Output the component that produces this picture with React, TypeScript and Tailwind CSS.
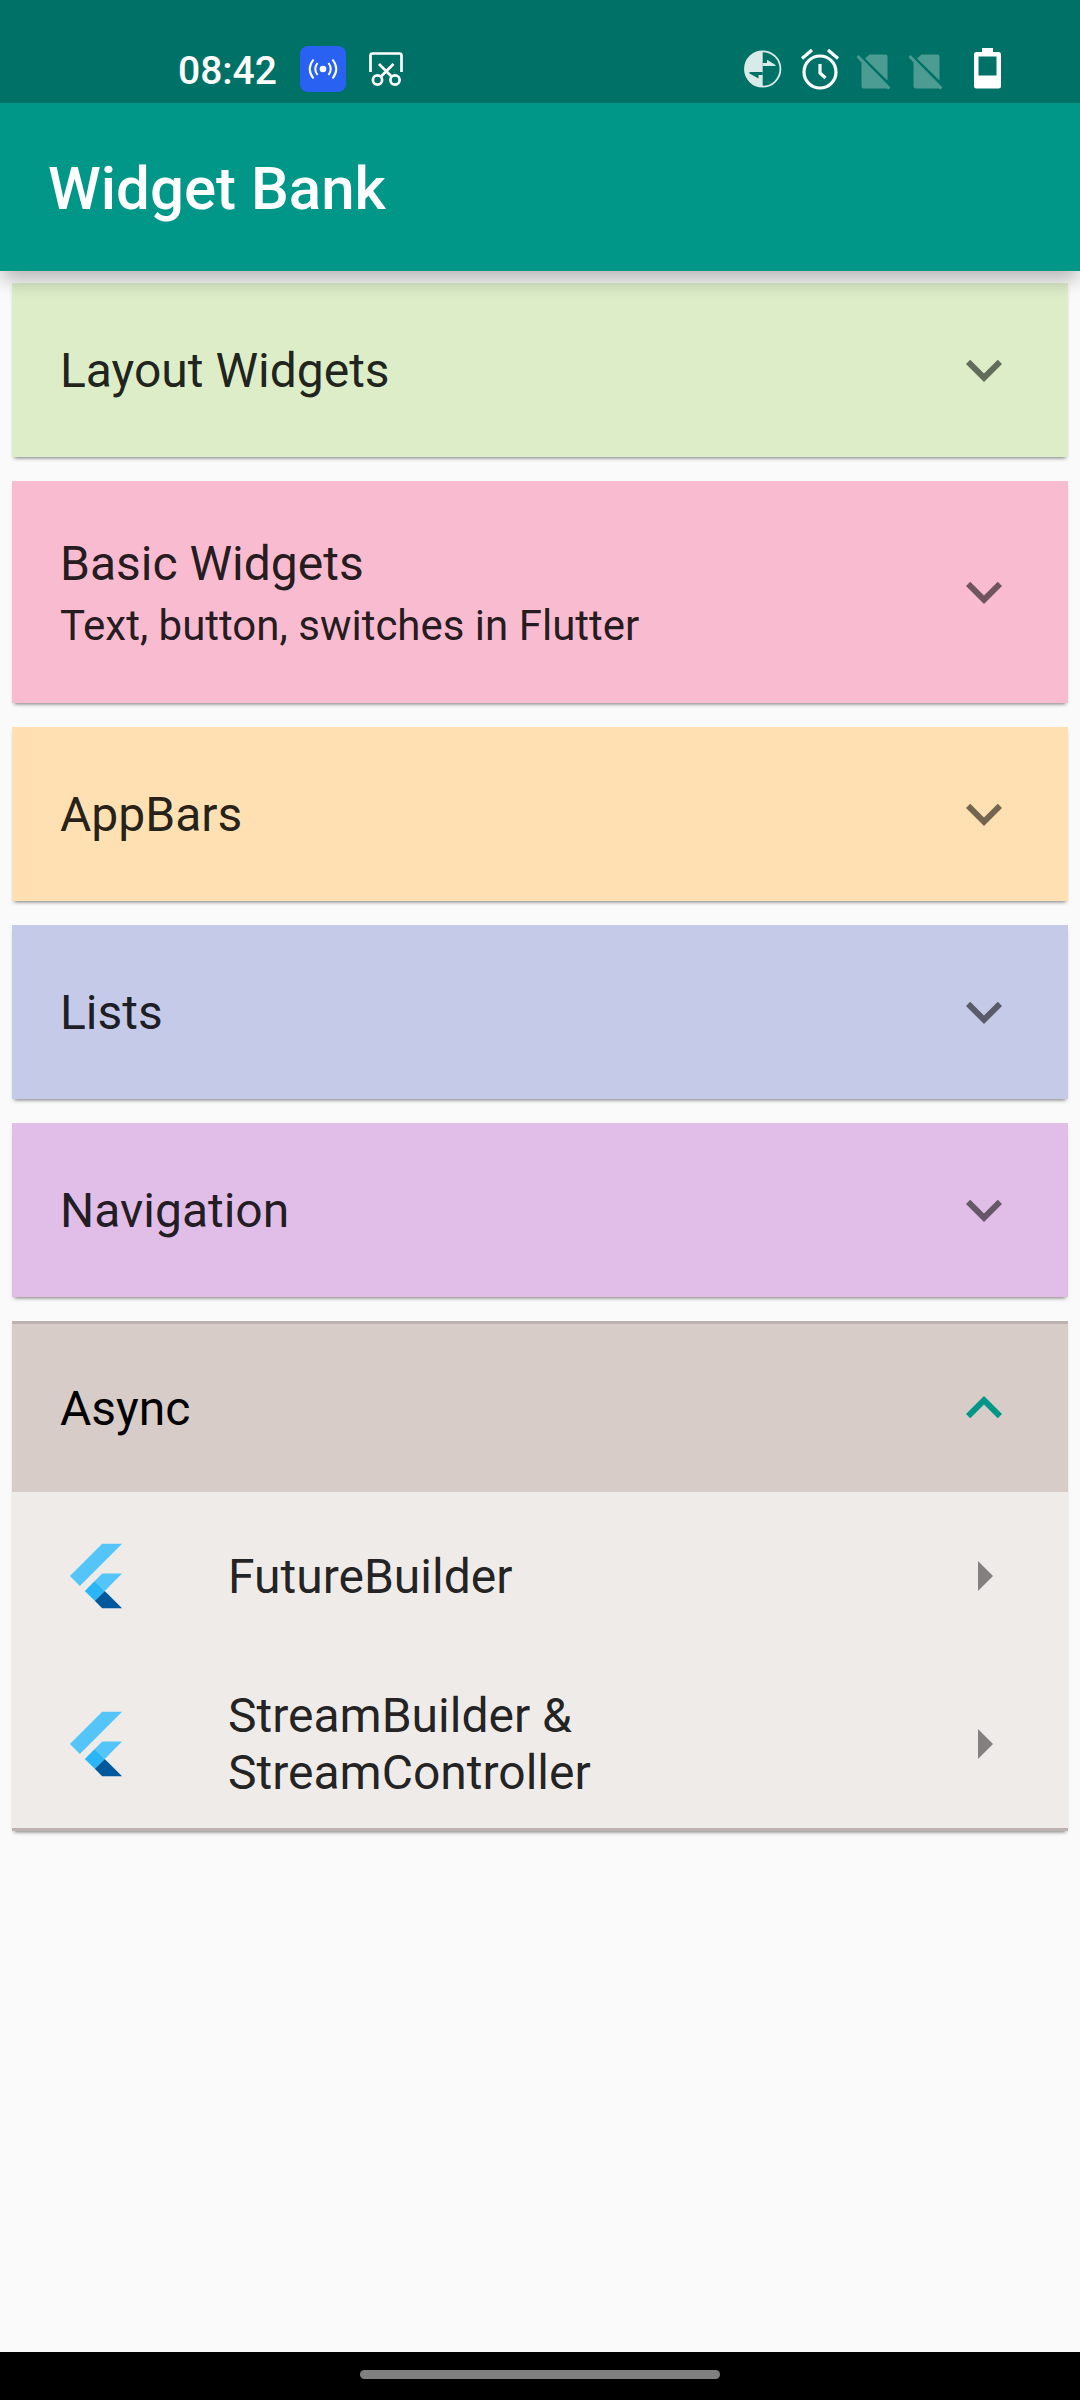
import React from "react";

type CardProps = { title: string; subtitle?: string; className: string };

function Chevron({ up = false, className = "" }: { up?: boolean; className?: string }) {
  return (
    <svg viewBox="0 0 24 24" className={`size-[72px] shrink-0 ${up ? "rotate-180" : ""} ${className}`} fill="currentColor">
      <path d="M16.59 8.59 12 13.17 7.41 8.59 6 10l6 6 6-6z" />
    </svg>
  );
}

const cardShadow = "shadow-[0_4px_3px_-3px_rgba(0,0,0,0.35),0_3px_4px_-1px_rgba(0,0,0,0.16)]";

function Card({ title, subtitle, className }: CardProps) {
  return (
    <section className={`flex items-center justify-between px-12 ${cardShadow} ${className}`}>
      <div className={`flex flex-col ${subtitle ? "pt-[3px]" : "pt-[2px]"}`}>
        <h2 className="text-[48px] leading-[56px]">{title}</h2>
        {subtitle && <p className="mt-[9px] text-[42px] leading-[50px]">{subtitle}</p>}
      </div>
      <Chevron className="text-black/55" />
    </section>
  );
}

function FlutterLogo() {
  return (
    <svg viewBox="0 0 166 202" className="size-[72px] shrink-0">
      <path fill="#54C5F8" d="M37.7 128.9 9.8 101 100.4 10.4h55.8z" />
      <path fill="#54C5F8" d="M156.2 94H100.4L79.5 114.9 107.4 142.8z" />
      <path fill="#01579B" d="M79.5 170.7 100.4 191.6h55.8L107.4 142.8z" />
      <path fill="#29B6F6" d="M51.6 142.8 79.5 114.9l27.9 27.9-27.9 27.9z" />
    </svg>
  );
}

function Row({ children }: { children: React.ReactNode }) {
  return (
    <div className="flex items-center px-12">
      <FlutterLogo />
      <div className="ml-24 flex-1 text-[48px] leading-[57px]">{children}</div>
      <svg viewBox="0 0 24 24" className="size-[72px] shrink-0 text-black/45" fill="currentColor">
        <path d="M10 17l5-5-5-5v10z" />
      </svg>
    </div>
  );
}

function NoSim() {
  return (
    <svg viewBox="0 0 35 36" className="h-9 w-[35px] text-white/30">
      <path fill="currentColor" d="M9 4.500 13.500 .5H29.500q2 0 2 2V26.500z" />
      <path fill="currentColor" d="M2.500 1 34.500 33.500 32.500 35.500 31 34.500H7.500q-2 0-2-2V8.500L.5 3z" />
    </svg>
  );
}

function StatusBar() {
  return (
    <header className="relative z-20 flex h-[103px] shrink-0 items-start bg-[#007166] text-white">
      <div className="ml-[178px] mt-[48px] w-[98px] text-[39px] font-medium leading-[46px]">08:42</div>
      <svg viewBox="0 0 46 46" className="ml-6 mt-[46px] size-[46px]" fill="none">
        <rect width="46" height="46" rx="8" fill="#2962F3" />
        <circle cx="23" cy="23" r="3.300" fill="#fff" />
        <path stroke="#fff" strokeWidth="2" d="M17.500 17q-4.500 6 0 12M28.500 17q4.500 6 0 12M13.500 13.500q-7.500 9.500 0 19M32.500 13.500q7.500 9.500 0 19" />
      </svg>
      <svg viewBox="0 0 36 36" className="ml-[22px] mt-[51px] size-9" fill="none" stroke="#fff" strokeWidth="2.700">
        <path d="M2.500 21V4.500q0-2 2-2h27q2 0 2 2V21" />
        <circle cx="9.500" cy="29" r="4.600" />
        <circle cx="27" cy="29" r="4.600" />
        <path d="M11 13 24 26M25.500 13 12.500 26" />
      </svg>
      <svg viewBox="0 0 38 38" className="ml-auto mt-[50px] size-[38px]" fill="none">
        <circle cx="18.700" cy="19" r="17.700" stroke="#d9ebe9" strokeWidth="1.800" />
        <path fill="#d9ebe9" d="M18.700 1v36a18 18 0 0 1 0-36z" />
        <path fill="#007166" d="M18.700 22H5.500V23.500L14.500 28.500V25H18.700z" />
        <path fill="#d9ebe9" d="M18.700 13H23V9.700L31.500 15V16H18.700z" />
      </svg>
      <svg viewBox="0 0 40 42" className="ml-[18px] mt-[48px] h-[42px] w-10" fill="none" stroke="#fff" strokeWidth="3.200">
        <circle cx="20" cy="24" r="16" />
        <path d="M20 16v9l5.500 5M2 10.500 12 2M38 10.500 28 2" />
      </svg>
      <div className="ml-4 mt-[54px]"><NoSim /></div>
      <div className="ml-[17px] mt-[54px]"><NoSim /></div>
      <svg viewBox="0 0 28 41" className="ml-[31px] mr-[78px] mt-[48px] h-[41px] w-7">
        <path fill="#fff" fillRule="evenodd" d="M8 0h11v4h5.500q2.500 0 2.500 2.500V38q0 2.500-2.500 2.500H2.500Q0 40.500 0 38V6.500Q0 4 2.500 4H8zM4.500 8.500v19H22.500v-19z" />
      </svg>
    </header>
  );
}

export default function App() {
  return (
    <div className="flex h-[2400px] w-[1080px] flex-col overflow-hidden bg-[#fafafa] font-['Roboto',sans-serif] text-black/87">
      <StatusBar />
      <div className="relative z-10 flex h-[168px] shrink-0 items-center bg-[#009688] pl-12 pt-[4px] text-white shadow-[0_12px_18px_-3px_rgba(0,0,0,0.27)]">
        <h1 className="text-[60px] font-medium leading-[72px]">Widget Bank</h1>
      </div>
      <main className="flex flex-1 flex-col gap-6 px-3 pt-3">
        <Card className="h-[174px] bg-[#dcedc8]" title="Layout Widgets" />
        <Card className="h-[222px] bg-[#f8bbd0]" title="Basic Widgets" subtitle="Text, button, switches in Flutter" />
        <Card className="h-[174px] bg-[#ffe0b2]" title="AppBars" />
        <Card className="h-[174px] bg-[#c5cae9]" title="Lists" />
        <Card className="h-[174px] bg-[#e1bee7]" title="Navigation" />
        <section className={`h-[510px] border-y-[3px] border-[#bcb3b0] bg-[#efebe9] ${cardShadow}`}>
          <div className="flex h-[168px] items-center justify-between bg-[#d7ccc8] px-12 text-black">
            <h2 className="pt-[2px] text-[48px] leading-[56px]">Async</h2>
            <Chevron up className="text-[#009688]" />
          </div>
          <div className="grid grid-rows-[168px_168px]">
            <Row>FutureBuilder</Row>
            <Row>StreamBuilder &amp;<br />StreamController</Row>
          </div>
        </section>
      </main>
      <footer className="flex h-12 shrink-0 items-start justify-center bg-black pt-[18px]">
        <div className="h-[9px] w-[360px] rounded-full bg-[#808080]" />
      </footer>
    </div>
  );
}
